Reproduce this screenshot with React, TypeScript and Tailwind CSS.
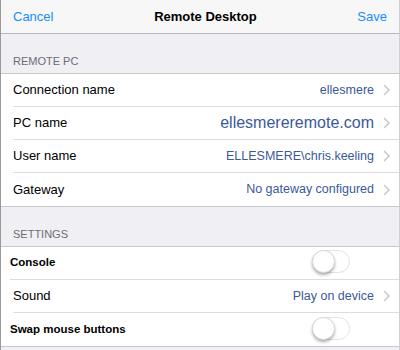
import type { ReactNode } from "react";

function Chevron() {
  return (
    <svg width="7" height="12" viewBox="0 0 7 12" className="ml-[9px] shrink-0">
      <path d="M1 1l5 5-5 5" fill="none" stroke="#c7c7cc" strokeWidth="1.5" />
    </svg>
  );
}

function Toggle() {
  return (
    <div className="relative h-[23px] w-[38px] rounded-full border border-[#e3e3e3] bg-white">
      <div className="absolute left-[-1px] top-[-1px] h-[23px] w-[23px] rounded-full bg-white shadow-[0_2px_3px_rgba(0,0,0,0.3)] border border-[#d8d8d8]" />
    </div>
  );
}

function Row({
  label,
  children,
  last,
  bold,
}: {
  label: string;
  children: ReactNode;
  last?: boolean;
  bold?: boolean;
}) {
  return (
    <div className={bold ? "pl-[9px]" : "pl-3"}>
      <div
        className={`flex h-[33px] items-center pr-[9px] ${
          last ? "h-[32px]" : "border-b border-[#dcdce0]"
        }`}
      >
        <span
          className={`flex-1 text-black ${
            bold ? "text-[11.5px] font-bold" : "text-[13px]"
          }`}
        >
          {label}
        </span>
        {children}
      </div>
    </div>
  );
}

function Value({ text, big }: { text: string; big?: boolean }) {
  return (
    <div className="flex items-center">
      <span
        className={`${big ? "text-[16px]" : "text-[12.5px]"} text-[#3b5998]`}
      >
        {text}
      </span>
      <Chevron />
    </div>
  );
}

export default function App() {
  return (
    <div
      className="h-[350px] w-[400px] overflow-hidden border-l border-r border-l-[#9a9a9a] border-r-[#d0d0d0] bg-[#efeff4]"
      style={{ fontFamily: "'Liberation Sans', Arial, sans-serif" }}
    >
      <div className="flex h-[34px] items-center justify-between border-b border-[#b8b8bc] bg-[#f7f7f7] px-3 text-[13px]">
        <span className="text-[#1a8cff]">Cancel</span>
        <span className="font-bold text-black">Remote Desktop</span>
        <span className="text-[#1a8cff]">Save</span>
      </div>

      <div className="flex h-[40px] items-end pb-[4px] pl-3 text-[11px] text-[#6d6d72] border-b border-[#c8c7cc]">
        REMOTE PC
      </div>
      <div className="bg-white border-b border-[#c8c7cc]">
        <Row label="Connection name">
          <Value text="ellesmere" />
        </Row>
        <Row label="PC name">
          <Value text="ellesmereremote.com" big />
        </Row>
        <Row label="User name">
          <Value text="ELLESMERE\chris.keeling" />
        </Row>
        <Row label="Gateway" last>
          <Value text="No gateway configured" />
        </Row>
      </div>

      <div className="flex h-[40px] items-end pb-[4px] pl-3 text-[11px] text-[#6d6d72] border-b border-[#c8c7cc]">
        SETTINGS
      </div>
      <div className="bg-white border-b border-[#c8c7cc]">
        <Row label="Console" bold>
          <div className="mr-[40px] -mt-[3px]">
            <Toggle />
          </div>
        </Row>
        <Row label="Sound">
          <Value text="Play on device" />
        </Row>
        <Row label="Swap mouse buttons" bold last>
          <div className="mr-[40px] -mt-[3px]">
            <Toggle />
          </div>
        </Row>
      </div>
    </div>
  );
}
